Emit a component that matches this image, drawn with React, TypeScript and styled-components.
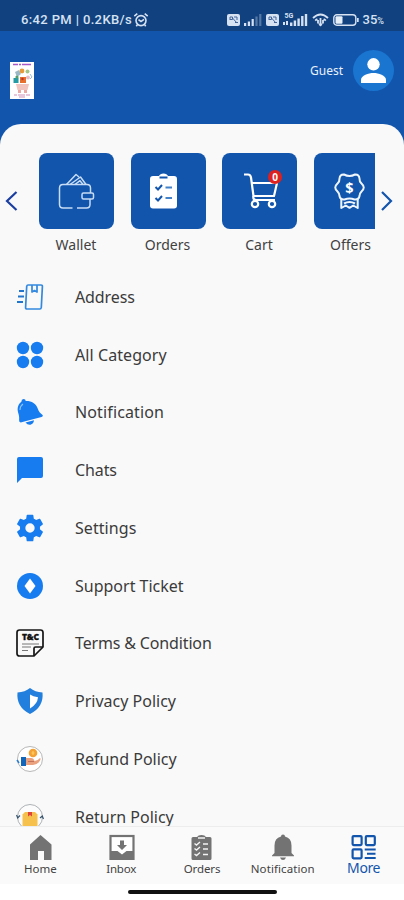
import React from "react";
import styled, { createGlobalStyle } from "styled-components";

const BLUE = "#1255ad";
const ACCENT = "#167cf0";

const GlobalStyle = createGlobalStyle`
  * { box-sizing: border-box; }
  body { margin: 0; background: #fff; font-family: "Noto Sans", "Open Sans", sans-serif; }
  svg { display: block; flex: none; }
`;

const Screen = styled.div`
  width: 404px;
  height: 900px;
  display: flex;
  flex-direction: column;
  overflow: hidden;
  background: ${BLUE};
`;

const StatusBar = styled.div`
  height: 31px;
  flex: none;
  padding: 9px 20px 0 21px;
  display: flex;
  justify-content: space-between;
  background: #11417f;
  color: #d6e2f2;
  font: 500 13px/22px Roboto, sans-serif;
`;

const StatusGroup = styled.div<{ $gap: number }>`
  display: flex;
  align-items: center;
  height: 22px;
  gap: ${(p) => p.$gap}px;
  white-space: nowrap;
`;

const StatusText = styled.span<{ $spacing?: number }>`
  letter-spacing: ${(p) => p.$spacing ?? 0}px;
  small { font-size: 9px; }
`;

const Header = styled.header`
  height: 93px;
  flex: none;
  padding: 0 10px;
  display: flex;
  align-items: center;
  justify-content: space-between;
`;

const Profile = styled.div`
  display: flex;
  align-items: center;
  gap: 10px;
  margin-bottom: 14px;
  color: #e9f1fb;
  font-size: 12px;
`;

const Logo = styled.div`
  margin-top: 5px;
`;

const Panel = styled.main`
  flex: 1;
  min-height: 0;
  overflow: hidden;
  padding-top: 29px;
  background: #f9f9f9;
  border-radius: 21px 21px 0 0;
`;

const Carousel = styled.section`
  display: flex;
  height: 115px;
`;

const Arrow = styled.button<{ $side: "left" | "right" }>`
  flex: none;
  width: ${(p) => (p.$side === "left" ? 39 : 29)}px;
  height: 96px;
  padding: 0 0 0 5px;
  border: 0;
  background: none;
  display: flex;
  align-items: center;
`;

const Track = styled.div`
  flex: 1;
  min-width: 0;
  display: flex;
  gap: 16.5px;
  overflow: hidden;
`;

const Shortcut = styled.div`
  flex: none;
  width: 75px;
  display: flex;
  flex-direction: column;
  align-items: center;
`;

const Tile = styled.div<{ $left: number; $top: number }>`
  width: 75px;
  height: 76px;
  padding: ${(p) => p.$top}px 0 0 ${(p) => p.$left}px;
  border-radius: 8px;
  background: ${BLUE};
`;

const ShortcutLabel = styled.span`
  margin: 6px 1px 0 0;
  font-size: 14px;
  line-height: 20px;
  color: #414141;
  white-space: nowrap;
`;

const Menu = styled.ul`
  list-style: none;
  margin: 0;
  padding: 0;
`;

const MenuRow = styled.li`
  height: 57.75px;
  padding: 0 16px;
  display: flex;
  align-items: center;
  gap: 31px;
`;

const MenuIcon = styled.span`
  width: 28px;
  height: 28px;
  display: flex;
  align-items: center;
  justify-content: center;
`;

const MenuLabel = styled.span<{ $spacing: number }>`
  font-size: 16px;
  line-height: 22px;
  color: #3b3b3b;
  letter-spacing: ${(p) => p.$spacing}px;
  white-space: nowrap;
`;

const NavBar = styled.nav`
  height: 58px;
  flex: none;
  display: grid;
  grid-template-columns: repeat(5, 1fr);
  background: #fafafa;
  border-top: 1px solid #ededed;
`;

const NavItem = styled.div<{ $active?: boolean }>`
  display: flex;
  flex-direction: column;
  align-items: center;
  padding-top: 7px;
  gap: ${(p) => (p.$active ? 0 : 1)}px;
  color: ${(p) => (p.$active ? BLUE : "#737373")};
`;

const NavLabel = styled.span<{ $active?: boolean; $spacing: number }>`
  font-size: ${(p) => (p.$active ? 14 : 11.5)}px;
  line-height: 16px;
  color: ${(p) => (p.$active ? BLUE : "#424242")};
  letter-spacing: ${(p) => p.$spacing}px;
`;

const GestureArea = styled.div`
  height: 16px;
  flex: none;
  padding: 6px 0 0 1px;
  background: #fff;
  display: flex;
  justify-content: center;
`;

const GesturePill = styled.div`
  width: 149px;
  height: 4px;
  border-radius: 2px;
  background: #111;
`;

const AlarmIcon = () => (
  <svg width="16" height="16" viewBox="0 0 16 16" fill="none" stroke="#d6e2f2" strokeWidth="1.6">
    <circle cx="8" cy="8.6" r="5" />
    <path d="M1.3 4.2 4.3 1.7M14.7 4.2l-3-2.5M5.5 7.6l2.5 2 3-2.3M4.3 12.8l-1 1.4M11.7 12.8l1 1.4" />
  </svg>
);

const SimIcon = () => (
  <svg width="13" height="12" viewBox="0 0 13 12">
    <rect width="13" height="12" rx="2" fill="#d6e2f2" />
    <path d="M3 6V3h2.500v2.500H3M5.500 4l4.500 5M7 3h3v3M8 8.500h3" fill="none" stroke="#41659b" />
  </svg>
);

const SignalIcon = () => (
  <svg width="18" height="12" viewBox="0 0 18 12" fill="#d6e2f2">
    <path d="M0 9h2.200v3H0zM3.800 7.500H6V12H3.800zM7.600 5h2.200v7H7.600z" />
    <path d="M11.400 2.500h2.200V12h-2.200zM15.200 0h2.200v12h-2.200z" opacity=".35" />
  </svg>
);

const Signal5GIcon = () => (
  <svg width="25" height="16" viewBox="0 0 25 16" fill="#d6e2f2">
    <text x="1.500" y="6" fontSize="7" fontWeight="700" fontFamily="Roboto, sans-serif">5G</text>
    <path d="M0 10h2v3H0zM3 9h2v4H3zM7 10.500h2.400V14H7zM10.700 8.500h2.400V14h-2.400zM14.400 6.500h2.400V14h-2.400zM18.100 4h2.400v10h-2.400zM21.800 2h2.400v12h-2.400z" />
  </svg>
);

const WifiIcon = () => (
  <svg width="17" height="14" viewBox="0 0 17 14" fill="none" stroke="#d6e2f2" strokeWidth="1.800">
    <path d="M1 5q7.500-7 15 0M3.200 7.600q1-1 2.200-1.500M11.600 6.100q1.300.6 2.200 1.500M8.500 5v8M6 7v3.500M11 7v3.500" />
    <path d="m6 10.500 2.500 3 2.500-3z" fill="#d6e2f2" stroke="none" />
  </svg>
);

const BatteryIcon = () => (
  <svg width="26" height="12" viewBox="0 0 26 12">
    <rect x=".8" y=".8" width="22" height="10.400" rx="3" fill="none" stroke="#d6e2f2" strokeWidth="1.400" />
    <rect x="2.500" y="2.300" width="7" height="7.400" rx="1" fill="#e6eef8" />
    <path d="M24 4h1.700v4H24z" fill="#d6e2f2" />
  </svg>
);

const StoreLogo = () => (
  <svg width="24" height="37" viewBox="0 0 24 37">
    <path fill="#fff" d="M0 0h24v37H0z" />
    <path d="M3 2.500h5M9 2.500h2M12 2.500h9" stroke="#a85ac9" strokeWidth="1.600" />
    <path d="M6 22h13l-1.500 6h-10z" fill="#f1c4bd" />
    <path d="M8 28h3v3H8zM14 28h3v3h-3z" fill="#eba9a5" />
    <path d="M3.500 16h5v5h-5z" fill="#249aa5" />
    <path d="M10 15h6v6h-6z" fill="#e66f2e" />
    <path d="M5 10l4-2 2 4-4 3z" fill="#9bb8c6" />
    <circle cx="12" cy="9" r="2.400" fill="#e69a3b" />
    <circle cx="17.500" cy="9.500" r="2" fill="#a2c486" />
    <circle cx="7" cy="15" r="1.600" fill="#53a06b" />
    <circle cx="18" cy="15.500" r="2" fill="#e7bcc6" />
    <circle cx="12.500" cy="17" r="1.200" fill="#be3228" />
    <path d="m20 12 2 3-2 2" fill="none" stroke="#8dc0de" />
    <path d="M4 33h3M8 33h7M16 33h4M9 35h6" stroke="#cf8fb9" />
  </svg>
);

const AvatarIcon = () => (
  <svg width="41" height="41" viewBox="0 0 41 41">
    <circle cx="20.500" cy="20.500" r="20.500" fill="#1975d0" />
    <circle cx="20.500" cy="14.300" r="6.200" fill="#fff" />
    <path d="M8 33v-3c0-4.700 7.500-7 12.500-7S33 25.300 33 30v3z" fill="#fff" />
  </svg>
);

const Chevron = ({ flip, color }: { flip?: boolean; color: string }) => (
  <svg width="14" height="20" viewBox="0 0 14 20" fill="none" stroke={color} strokeWidth="2.200">
    <path d={flip ? "M2 1l9 9-9 9" : "M11.500 1l-9.500 9 9.500 9"} />
  </svg>
);

const WalletIcon = () => (
  <svg width="37" height="37" viewBox="0 0 37 37" fill="none" stroke="#c8dcf5" strokeWidth="1.500" strokeLinejoin="round">
    <path d="M14.500 35H5q-3.500 0-3.500-3.500V15q0-3.500 3.500-3.500h24q3.500 0 3.500 3.500v5M32 26v5.500q0 3.500-3.500 3.500H19" />
    <rect x="24" y="20" width="11.500" height="6" rx="1.500" />
    <path d="M8.500 11.500 18 1.500l3 2.500M12 11.500 22.500 4l5.500 7.500M17 11.500l5-3.800 3 3.800" />
  </svg>
);

const ClipboardIcon = () => (
  <svg width="27" height="36" viewBox="0 0 27 36">
    <path d="M3 3h6q1-2.500 4.500-2.500T18 3h6q3 0 3 3v26.500q0 3-3 3H3q-3 0-3-3V6q0-3 3-3z" fill="#fff" />
    <path d="M9.500 4.500h8" stroke={BLUE} strokeWidth="1.800" />
    <path d="m5.500 14 2.500 2.500 4-4.500M5.500 25l2.500 2.500 4-4.500" fill="none" stroke={BLUE} strokeWidth="2" />
    <path d="M15.500 14.500h6.500M15.500 25h6.500" stroke="#4382c8" strokeWidth="2" />
  </svg>
);

const CartIcon = () => (
  <svg width="40" height="40" viewBox="0 0 40 40">
    <g fill="none" stroke="#fff" strokeWidth="2.200" strokeLinejoin="round">
      <path d="M1 4.500h4q2.500 0 3 3L10.500 26H31l3-13H8.800" />
      <path d="M10.500 26q-1 4 3 4H32" />
      <circle cx="12" cy="34" r="3.200" />
      <circle cx="29" cy="34" r="3.200" />
    </g>
    <circle cx="32" cy="7" r="7" fill="#de211e" />
    <text x="32" y="10.500" textAnchor="middle" fontSize="10" fontWeight="700" fill="#fff" fontFamily="Noto Sans, sans-serif">0</text>
  </svg>
);

const OffersIcon = () => (
  <svg width="31" height="37" viewBox="0 0 31 37" fill="none" stroke="#eef5fc" strokeWidth="2" strokeLinejoin="round">
    <path d="M10 1.500q5.500 3 11 0 4-.3 4.500 4-.2 3 2 5 4.500 4 0 8-2 2-2 4.500-.8 4-5 3.500-5-2-10 0-4.200.5-5-3.500 0-2.500-2-4.500-4.500-4 0-8 2.200-2 2-5 .5-4.300 4.500-4z" />
    <path d="M7.300 26v9l4.500-2.500 3.700 2.300 3.700-2.300 4.500 2.500v-9M10 30.500q5.500-3 11 0" />
    <text x="15.500" y="19.500" textAnchor="middle" fontSize="14.500" fontWeight="700" fill="#fff" stroke="none" fontFamily="Noto Sans, sans-serif">$</text>
  </svg>
);

const AddressIcon = () => (
  <svg width="28" height="28" viewBox="0 0 28 28" fill="none" stroke="#3389df" strokeWidth="1.700" strokeLinejoin="round">
    <path d="M12 2h13q1.500 0 1.400 1.500L25.300 24.500q-.2 1.500-1.500 1.500H11q-1.500 0-1.400-1.500L10.700 3.500Q11 2 12 2z" />
    <path d="M16 2v7l2.500-1.500L21 9V2" />
    <path d="M3 8h5M2 13.500h6M1 19h6" stroke="#2176cc" strokeWidth="2.200" />
  </svg>
);

const CategoryIcon = () => (
  <svg width="28" height="28" viewBox="0 0 28 28" fill={ACCENT}>
    <circle cx="7" cy="7" r="6.200" />
    <circle cx="21" cy="7" r="6.200" />
    <circle cx="7" cy="21" r="6.200" />
    <circle cx="21" cy="21" r="6.200" />
  </svg>
);

const TiltedBellIcon = () => (
  <svg width="28" height="28" viewBox="0 0 28 28" fill={ACCENT}>
    <path d="M5.500 3.500Q5.300 1 7.500 1t2.200 2C15.500 2.800 20 5.500 21.700 10.500c.9 3 2.600 4.700 4.600 6.200q1.500 1.500-.8 2.300L5.500 24.300q-2.600.5-2.400-2.300c.4-3-.3-5-1-7.500C1 10 2 6.500 5.500 3.500z" />
    <path d="m9.500 24.500 8.500-2.200q-.5 3.700-3.500 4.400-3 .4-5-2.200z" />
    <path d="M4 12q0-4 3-6" fill="none" stroke="#8fc3ff" strokeWidth="1.100" />
  </svg>
);

const ChatIcon = () => (
  <svg width="28" height="28" viewBox="0 0 28 28" fill={ACCENT}>
    <path d="M3 1h22q2 0 2 2v17q0 2-2 2H6l-5 5V3q0-2 2-2z" />
  </svg>
);

const GearIcon = () => (
  <svg width="32" height="32" viewBox="0 0 24 24" fill={ACCENT}>
    <path d="M19.430 12.980a7.800 7.800 0 0 0 0-1.960l2.110-1.650a.5.5 0 0 0 .12-.64l-2-3.460a.5.5 0 0 0-.61-.22l-2.490 1a7.300 7.300 0 0 0-1.690-.98l-.38-2.650A.5.500 0 0 0 14 2h-4a.5.5 0 0 0-.49.420l-.38 2.650c-.61.250-1.170.590-1.690.980l-2.490-1a.5.5 0 0 0-.61.220l-2 3.460a.5.5 0 0 0 .12.640l2.110 1.650a7.900 7.900 0 0 0 0 1.960l-2.110 1.650a.5.5 0 0 0-.12.640l2 3.460c.12.220.39.300.61.220l2.490-1c.52.400 1.080.730 1.690.980l.38 2.650c.03.240.240.420.490.420h4c.25 0 .46-.18.490-.42l.38-2.650c.61-.25 1.170-.59 1.690-.98l2.490 1c.23.090.49 0 .61-.22l2-3.460a.5.5 0 0 0-.12-.64zM12 15.500a3.500 3.500 0 1 1 0-7 3.500 3.500 0 0 1 0 7z" />
  </svg>
);

const TicketIcon = () => (
  <svg width="28" height="28" viewBox="0 0 28 28">
    <circle cx="14" cy="14" r="13" fill={ACCENT} />
    <path d="m14 6.500 5.500 7.500-5.500 7.500L8.500 14z" fill="#fff" />
  </svg>
);

const TermsIcon = () => (
  <svg width="28" height="28" viewBox="0 0 28 28" fill="none" stroke="#161616" strokeWidth="1.700" strokeLinejoin="round">
    <path d="M3.500 1h21Q27 1 27 3.500V18l-9 9H3.500Q1 27 1 24.500v-21Q1 1 3.500 1z" />
    <path d="M18 27v-7.500q0-1.500 1.500-1.500H27" />
    <text x="14.500" y="11.300" textAnchor="middle" fontSize="8.500" fontWeight="900" fill="#111" stroke="#111" strokeWidth=".3" textLength="17" fontFamily="Noto Sans, sans-serif">T&amp;C</text>
    <path d="M6 15h17M6 18h9M6 21.500h6" stroke="#777" strokeWidth="1.100" />
  </svg>
);

const ShieldIcon = () => (
  <svg width="28" height="28" viewBox="0 0 28 28">
    <path d="M14 1q5 4 12.500 4.500Q28 20 14 27 0 20 1.500 5.500 9 5 14 1z" fill="#237fdd" />
    <path d="M14 7.500q3 2.200 8 2.700Q21.500 17 14 21.500z" fill="#fff" />
  </svg>
);

const RefundIcon = () => (
  <svg width="28" height="28" viewBox="0 0 28 28">
    <circle cx="14" cy="14" r="12.500" fill="#fff" stroke="#b8b8b8" />
    <circle cx="17" cy="8" r="4.300" fill="#f3a233" />
    <path d="M15.500 8h3M17 6v4" stroke="#ffd069" />
    <path d="M5 12h5v9H5z" fill="#1266ba" />
    <path d="M10 13h5q3 0 3 2.500 3 1 6-2.500 1.500 1-1 4t-6 3h-7z" fill="#eaa17e" />
    <path d="M12 16.500h6" stroke="#b86452" strokeWidth=".8" />
    <path d="m1 15 2 3" stroke="#2d7ccc" strokeWidth="1.500" />
  </svg>
);

const ReturnIcon = () => (
  <svg width="28" height="28" viewBox="0 0 28 28">
    <circle cx="14" cy="14" r="12.500" fill="#fcfcfc" stroke="#aeb2b5" />
    <path d="m.5 12 1.200 3L4 12.500M24 15l2.300-2 1.200 3" fill="none" stroke="#35536c" strokeWidth="1.200" />
    <path d="M6.500 11.500 9 9h10l2.500 2.500V26h-15z" fill="#f6c14d" />
    <path d="M12 9h4v4.500l-2-1.500-2 1.500z" fill="#df453a" />
  </svg>
);

const HomeIcon = () => (
  <svg width="27" height="26" viewBox="0 0 27 26" fill="currentColor">
    <path d="M13.500 1 24.500 10.500V26H17v-9h-6v9H3V10.500z" />
  </svg>
);

const InboxIcon = () => (
  <svg width="27" height="26" viewBox="0 0 27 26">
    <rect x="2.500" y="2" width="23" height="23" fill="#fff" stroke="currentColor" strokeWidth="2.200" />
    <path d="M2 17h7.500l4.500 3.500 4.500-3.500H26v9H2z" fill="currentColor" />
    <path d="M12 6.500h4V11h3l-5 5-5-5h3z" fill="currentColor" />
  </svg>
);

const NavOrdersIcon = () => (
  <svg width="27" height="26" viewBox="0 0 27 26">
    <path d="M5 3h4q1-2 4.500-2T18 3h4q1.500 0 1.500 1.500v20Q23.500 26 22 26H5q-1.500 0-1.500-1.500v-20Q3.500 3 5 3z" fill="currentColor" />
    <path d="M10 4h7M15 10h5M15 15h5M15 20.500h5M6.500 9.500l2 1.500 3.500-3M6.500 14.500l2 1.500 3.500-3M6.500 20l2 1.500 3.500-3" fill="none" stroke="#f3f3f3" strokeWidth="1.400" />
  </svg>
);

const NavBellIcon = () => (
  <svg width="27" height="26" viewBox="0 0 27 26" fill="currentColor">
    <path d="M12 2.500Q12 .5 14 .5t2 2q6.500 1.500 6.500 9v7.500l2.500 2.500v.8H3v-.8l2.500-2.500v-7.500q0-7.500 6.500-9z" />
    <path d="M11 23.500h6q-1 2.500-3 2.500t-3-2.500z" />
  </svg>
);

const MoreIcon = () => (
  <svg width="27" height="26" viewBox="0 0 27 26" fill="none" stroke="currentColor" strokeWidth="2.200">
    <rect x="2.600" y="2.100" width="9" height="9" rx="1" />
    <rect x="15.800" y="2.100" width="9" height="9" rx="1" />
    <rect x="2.600" y="15.300" width="9" height="9" rx="1" />
    <path d="M14.700 15.500h11M17 19.700h8.500M14.700 24h11" strokeWidth="1.900" />
  </svg>
);

const shortcuts = [
  { label: "Wallet", left: 19, top: 19.5, icon: <WalletIcon /> },
  { label: "Orders", left: 19.5, top: 20, icon: <ClipboardIcon /> },
  { label: "Cart", left: 21, top: 17, icon: <CartIcon /> },
  { label: "Offers", left: 20, top: 19.5, icon: <OffersIcon /> },
];

const menu = [
  { label: "Address", spacing: -0.1, icon: <AddressIcon /> },
  { label: "All Category", spacing: 0.08, icon: <CategoryIcon /> },
  { label: "Notification", spacing: 0.13, icon: <TiltedBellIcon /> },
  { label: "Chats", spacing: -0.1, icon: <ChatIcon /> },
  { label: "Settings", spacing: 0.06, icon: <GearIcon /> },
  { label: "Support Ticket", spacing: 0, icon: <TicketIcon /> },
  { label: "Terms & Condition", spacing: -0.15, icon: <TermsIcon /> },
  { label: "Privacy Policy", spacing: 0, icon: <ShieldIcon /> },
  { label: "Refund Policy", spacing: 0, icon: <RefundIcon /> },
  { label: "Return Policy", spacing: 0, icon: <ReturnIcon /> },
];

const tabs = [
  { label: "Home", spacing: 0, icon: <HomeIcon /> },
  { label: "Inbox", spacing: -0.2, icon: <InboxIcon /> },
  { label: "Orders", spacing: -0.1, icon: <NavOrdersIcon /> },
  { label: "Notification", spacing: 0.1, icon: <NavBellIcon /> },
  { label: "More", spacing: -0.4, icon: <MoreIcon />, active: true },
];

export default function App() {
  return (
    <>
      <GlobalStyle />
      <Screen>
        <StatusBar>
          <StatusGroup $gap={1}>
            <StatusText $spacing={0.37}>6:42 PM | 0.2KB/s</StatusText>
            <AlarmIcon />
          </StatusGroup>
          <StatusGroup $gap={4}>
            <SimIcon />
            <SignalIcon />
            <SimIcon />
            <Signal5GIcon />
            <WifiIcon />
            <BatteryIcon />
            <StatusText>35<small>%</small></StatusText>
          </StatusGroup>
        </StatusBar>
        <Header>
          <Logo><StoreLogo /></Logo>
          <Profile>
            Guest
            <AvatarIcon />
          </Profile>
        </Header>
        <Panel>
          <Carousel>
            <Arrow $side="left" aria-label="Previous"><Chevron color="#1b3fa0" /></Arrow>
            <Track>
              {shortcuts.map((s) => (
                <Shortcut key={s.label}>
                  <Tile $left={s.left} $top={s.top}>{s.icon}</Tile>
                  <ShortcutLabel>{s.label}</ShortcutLabel>
                </Shortcut>
              ))}
            </Track>
            <Arrow $side="right" aria-label="Next"><Chevron flip color="#1255ad" /></Arrow>
          </Carousel>
          <Menu>
            {menu.map((m) => (
              <MenuRow key={m.label}>
                <MenuIcon>{m.icon}</MenuIcon>
                <MenuLabel $spacing={m.spacing}>{m.label}</MenuLabel>
              </MenuRow>
            ))}
          </Menu>
        </Panel>
        <NavBar>
          {tabs.map((t) => (
            <NavItem key={t.label} $active={t.active}>
              {t.icon}
              <NavLabel $active={t.active} $spacing={t.spacing}>{t.label}</NavLabel>
            </NavItem>
          ))}
        </NavBar>
        <GestureArea><GesturePill /></GestureArea>
      </Screen>
    </>
  );
}
